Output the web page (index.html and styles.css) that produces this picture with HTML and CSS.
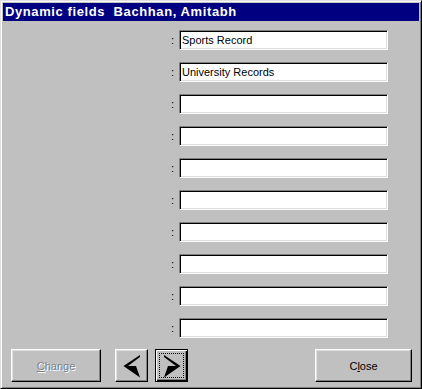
FILE: index.html
```html
<!DOCTYPE html>
<html lang="en">
<head>
  <meta charset="UTF-8" />
  <title>Dynamic fields</title>
  <link rel="stylesheet" href="styles.css">
</head>
<body>
  <div class="window">
    <div class="titlebar">Dynamic fields&nbsp; Bachhan, Amitabh</div>

    <div class="fields">
      <div class="row"><span class="colon">:</span><div class="field">Sports Record</div></div>
      <div class="row"><span class="colon">:</span><div class="field">University Records</div></div>
      <div class="row"><span class="colon">:</span><div class="field"></div></div>
      <div class="row"><span class="colon">:</span><div class="field"></div></div>
      <div class="row"><span class="colon">:</span><div class="field"></div></div>
      <div class="row"><span class="colon">:</span><div class="field"></div></div>
      <div class="row"><span class="colon">:</span><div class="field"></div></div>
      <div class="row"><span class="colon">:</span><div class="field"></div></div>
      <div class="row"><span class="colon">:</span><div class="field"></div></div>
      <div class="row"><span class="colon">:</span><div class="field"></div></div>
    </div>

    <div class="footer">
      <button class="btn btn-change" disabled><u>C</u>hange</button>
      <button class="btn btn-arrow btn-prev">
        <svg width="18" height="24" viewBox="0 0 18 24">
          <polygon points="0.5,12 17,1 17,3 5,12" fill="#000"/>
          <polygon points="0.5,12 13,12 17,23.5" fill="#000"/>
        </svg>
      </button>
      <button class="btn btn-arrow btn-next focused">
        <span class="focus-rect">
          <svg width="18" height="24" viewBox="0 0 18 24">
            <polygon points="17.5,12 1,1 1,3 13,12" fill="#000"/>
            <polygon points="17.5,12 5,12 1,23.5" fill="#000"/>
          </svg>
        </span>
      </button>
      <span class="spacer"></span>
      <button class="btn btn-close">C<u>l</u>ose</button>
    </div>
  </div>
</body>
</html>
```

FILE: styles.css
```css
html, body {
  margin: 0;
  padding: 0;
  background: #c0c0c0;
}

body {
  font-family: 'Liberation Sans', Arial, sans-serif;
  font-size: 11px;
}

.window {
  box-sizing: border-box;
  width: 422px;
  height: 389px;
  padding: 2px;
  background: #c0c0c0;
  border: 1px solid;
  border-color: #dfdfdf #000 #000 #dfdfdf;
  box-shadow: inset 1px 1px #fff, inset -1px -1px #808080;
}

.titlebar {
  height: 18px;
  line-height: 18px;
  padding-left: 2px;
  background: #000080;
  color: #fff;
  font-weight: bold;
  font-size: 13px;
  letter-spacing: 0.6px;
  white-space: nowrap;
}

.fields {
  display: flex;
  flex-direction: column;
  gap: 12px;
  padding-top: 9px;
}

.row {
  display: flex;
  align-items: center;
  padding-left: 168px;
}

.colon {
  width: 8px;
  color: #000;
  line-height: 20px;
}

.field {
  box-sizing: border-box;
  width: 209px;
  height: 20px;
  padding: 3px 2px 0;
  background: #fff;
  color: #000;
  font-size: 11px;
  border: 1px solid;
  border-color: #808080 #fff #fff #808080;
  box-shadow: inset 1px 1px #000, inset -1px -1px #dfdfdf;
  white-space: nowrap;
}

.footer {
  display: flex;
  align-items: flex-start;
  padding: 11px 7px 0 8px;
}

.btn {
  box-sizing: border-box;
  height: 33px;
  padding: 0;
  margin: 0;
  background: #c0c0c0;
  color: #000;
  font-family: 'Liberation Sans', Arial, sans-serif;
  font-size: 11px;
  border: 1px solid;
  border-color: #fff #000 #000 #fff;
  box-shadow: inset -1px -1px #808080, inset 1px 1px #dfdfdf;
  display: flex;
  align-items: center;
  justify-content: center;
}

.btn-change {
  width: 90px;
  color: #808080;
  text-shadow: 1px 1px #fff;
}

.btn-arrow {
  width: 33px;
  margin-left: 14px;
}

.btn-next {
  margin-left: 7px;
}

.btn.focused {
  border: 1px solid #000;
  box-shadow: inset 1px 1px #fff, inset -1px -1px #000, inset -2px -2px #808080;
}

.focus-rect {
  box-sizing: border-box;
  width: 25px;
  height: 25px;
  border: 1px dotted #000;
  display: flex;
  align-items: center;
  justify-content: center;
}

.spacer {
  flex: 1;
}

.btn-close {
  width: 97px;
}
```
